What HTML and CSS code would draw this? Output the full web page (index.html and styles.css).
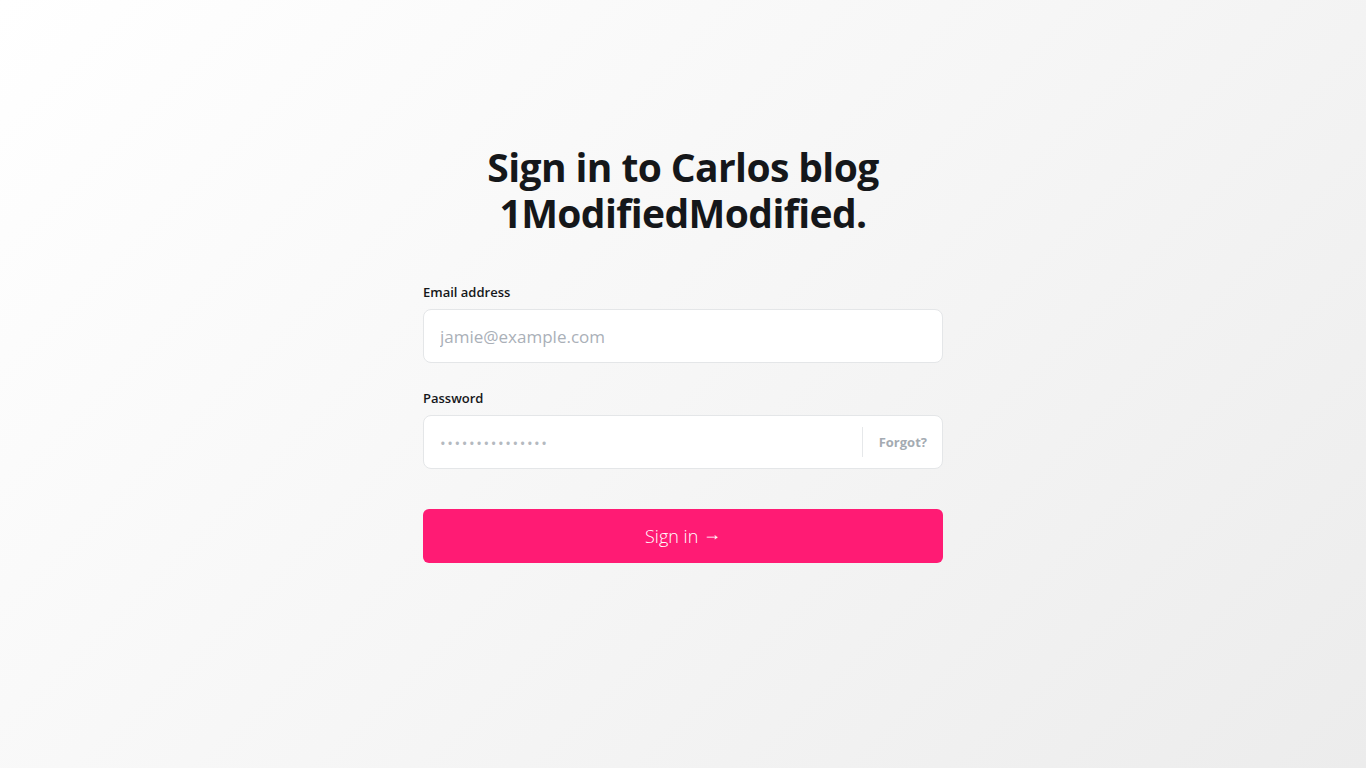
FILE: index.html
```html
<!DOCTYPE html>
<html lang="en">
<head>
<meta charset="utf-8">
<title>Sign in</title>
<link rel="stylesheet" href="styles.css">
</head>
<body>
<main class="page">
  <form class="card">
    <h1 class="title">Sign in to Carlos blog 1ModifiedModified.</h1>
    <div class="field">
      <label class="label" for="email">Email address</label>
      <div class="input-box">
        <input id="email" class="input" type="email" placeholder="jamie@example.com">
      </div>
    </div>
    <div class="field">
      <label class="label" for="pw">Password</label>
      <div class="input-box">
        <input id="pw" class="input input-pw" type="password" placeholder="•••••••••••••••">
        <span class="divider"></span>
        <a class="forgot" href="#">Forgot?</a>
      </div>
    </div>
    <button class="btn" type="button">Sign in <span class="arrow">→</span></button>
  </form>
</main>
</body>
</html>
```

FILE: styles.css
```css
* { box-sizing: border-box; }
html, body { margin: 0; height: 100%; }
body {
  font-family: "Open Sans", "Noto Sans", "Liberation Sans", sans-serif;
  background: linear-gradient(135deg, #ffffff 0%, #f6f6f6 50%, #ececec 100%);
  color: #15171a;
}
.page {
  min-height: 100vh;
  display: flex;
  justify-content: center;
  padding-top: 144px;
}
.card {
  width: 520px;
  display: flex;
  flex-direction: column;
}
.title {
  margin: 0 0 47px;
  text-align: center;
  font-size: 39px;
  line-height: 46px;
  font-weight: 700;
  letter-spacing: -0.6px;
  padding: 0 60px;
  color: #15171a;
}
.field {
  display: flex;
  flex-direction: column;
  margin-bottom: 26px;
}
.label {
  font-size: 13px;
  font-weight: 600;
  line-height: 18px;
  margin-bottom: 8px;
  color: #15171a;
}
.input-box {
  height: 54px;
  background: #fff;
  border: 1px solid #e4e6e8;
  border-radius: 8px;
  display: flex;
  align-items: center;
}
.input {
  flex: 1;
  height: 100%;
  border: 0;
  outline: none;
  background: transparent;
  padding: 0 16px;
  font-family: inherit;
  font-size: 17px;
  color: #15171a;
}
.input::placeholder { color: #aab0b8; }
.input-pw::placeholder { font-size: 15px; letter-spacing: 1.6px; color: #b4b9bf; }
.divider {
  width: 1px;
  height: 30px;
  background: #e6e8ea;
}
.forgot {
  padding: 0 15px 0 16px;
  font-size: 13px;
  font-weight: 700;
  color: #a4abb2;
  text-decoration: none;
}
.btn {
  margin-top: 14px;
  height: 54px;
  border: 0;
  border-radius: 6px;
  background: #ff1b74;
  color: #fff;
  font-family: inherit;
  font-size: 18px;
  font-weight: 300;
  cursor: pointer;
}
.arrow {
  font-family: "Liberation Sans", sans-serif;
  font-size: 18px;
  font-weight: 400;
  vertical-align: 3px;
}
```
